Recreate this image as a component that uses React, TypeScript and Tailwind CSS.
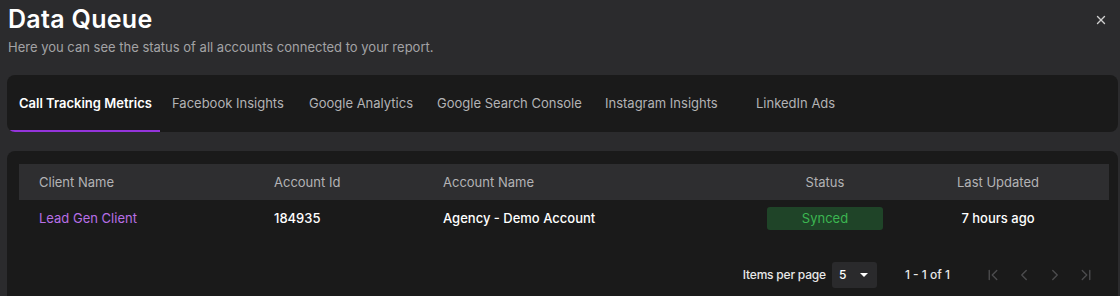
import { X, ChevronFirst, ChevronLeft, ChevronRight, ChevronLast } from 'lucide-react';

const tabs = [
  { label: 'Call Tracking Metrics', w: 'w-[153px]', active: true },
  { label: 'Facebook Insights', w: 'w-[137px]' },
  { label: 'Google Analytics', w: 'w-[128px]' },
  { label: 'Google Search Console', w: 'w-[168px]' },
  { label: 'Instagram Insights', w: 'w-[151px]' },
  { label: 'LinkedIn Ads', w: 'w-[110px]' },
];

export default function App() {
  return (
    <div className="h-[296px] overflow-hidden bg-[#2b2b2d] text-white font-['Inter',sans-serif]">
      {/* header */}
      <div className="flex justify-between pl-2 pr-[12px] pt-[3px]">
        <div>
          <h1 className="text-[25px] font-semibold leading-[32px] tracking-[0.3px]">Data Queue</h1>
          <p className="mt-[3px] text-[13px] leading-[18px] text-[#a3a3a5]">
            Here you can see the status of all accounts connected to your report.
          </p>
        </div>
        <button className="mt-[10px] h-[14px] text-[#cfcfcf]">
          <X size={14} strokeWidth={2.4} />
        </button>
      </div>

      {/* tabs */}
      <div className="mx-[7px] mt-[19px] mr-[2px] flex h-[57px] overflow-hidden rounded-lg bg-[#1a1a1a]">
        {tabs.map((t) => (
          <div
            key={t.label}
            className={[
              'relative flex items-center pl-3 text-[13px]',
              t.w,
              t.active ? 'font-semibold text-white' : 'text-[#b3b3b5]',
            ].join(' ')}
          >
            {t.label}
            {t.active && <span className="absolute bottom-0 left-px right-0 h-[2px] bg-[#9434db]" />}
          </div>
        ))}
      </div>

      {/* table card */}
      <div className="mx-[7px] mr-[2px] mt-[19px] rounded-lg bg-[#1a1a1a] pl-3 pr-[9px] pt-[13px] pb-6">
        <div className="grid h-[36px] grid-cols-[235px_169px_317px_170px_1fr] items-center bg-[#2e2e30] pt-[2px] text-[13px] text-[#b3b3b5]">
          <div className="pl-5">Client Name</div>
          <div className="pl-5">Account Id</div>
          <div className="pl-5">Account Name</div>
          <div className="text-center">Status</div>
          <div className="pr-[23px] text-center">Last Updated</div>
        </div>
        <div className="grid h-[36px] grid-cols-[235px_169px_317px_170px_1fr] items-center text-[13px]">
          <div className="pl-5 pt-[2px] text-[#b86fe6]">Lead Gen Client</div>
          <div className="pl-5 pt-[2px] font-medium text-white">184935</div>
          <div className="pl-5 pt-[2px] font-medium text-white">Agency - Demo Account</div>
          <div className="flex justify-center pt-[1px]">
            <span className="flex h-[23px] w-[116px] items-center justify-center rounded-[3px] bg-[#1f4428] text-[#3cb651]">
              Synced
            </span>
          </div>
          <div className="pr-[23px] pt-[2px] text-center font-medium text-white">7 hours ago</div>
        </div>

        <div className="mt-[26px] flex items-center justify-end pr-[14px] text-[12px] font-medium">
          <span className="mr-[6px] tracking-[-0.2px] text-[#e8e8e8]">Items per page</span>
          <div className="flex h-[26px] w-[45px] items-center justify-between rounded-[3px] bg-[#2a2a2c] pl-[7px] pr-[9px]">
            <span>5</span>
            <span className="h-0 w-0 border-x-[4px] border-t-[4px] border-x-transparent border-t-white" />
          </div>
          <span className="ml-[28px] mr-[34px] text-[#e8e8e8]">1 - 1 of 1</span>
          <div className="flex items-center gap-[13px] text-[#4c4c4e]">
            <ChevronFirst size={18} strokeWidth={1.8} />
            <ChevronLeft size={18} strokeWidth={1.8} />
            <ChevronRight size={18} strokeWidth={1.8} />
            <ChevronLast size={18} strokeWidth={1.8} />
          </div>
        </div>
      </div>
    </div>
  );
}
